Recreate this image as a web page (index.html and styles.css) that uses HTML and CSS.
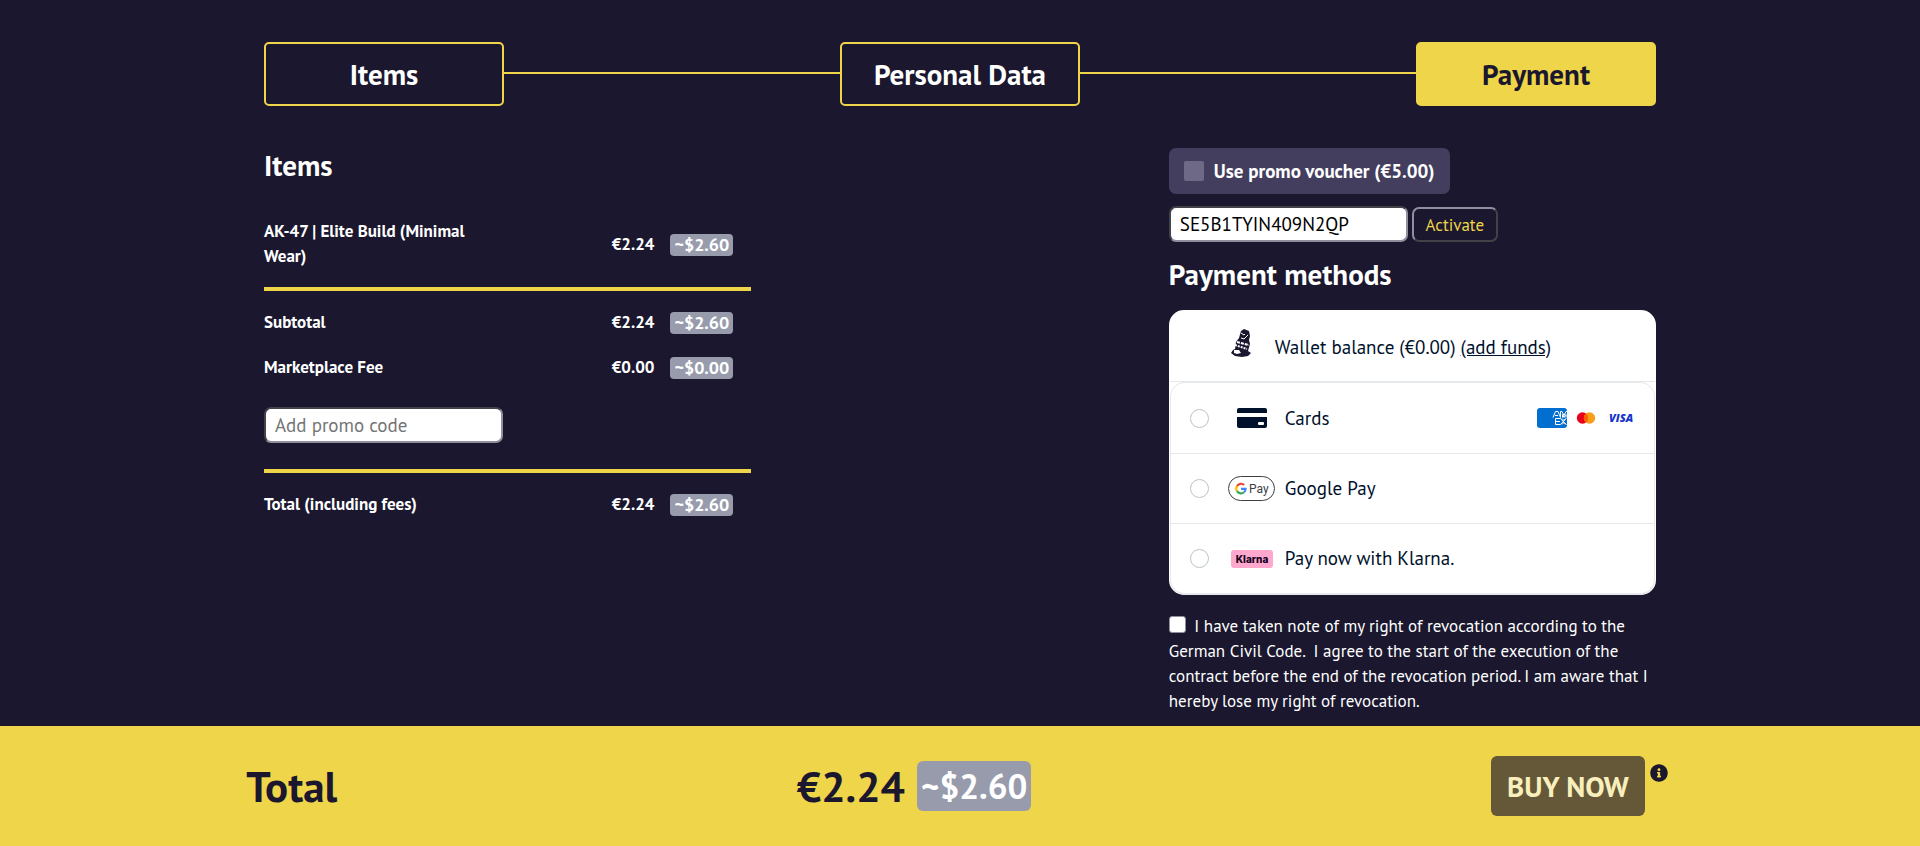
FILE: index.html
```html
<!DOCTYPE html>
<html lang="en">
<head>
    <meta charset="UTF-8">
    <meta name="viewport" content="width=device-width, initial-scale=1">
    <title>Checkout - Payment</title>
    <link rel="stylesheet" href="styles.css">
</head>
<body>
<main class="container">
    <nav class="steps">
        <a class="step" href="#items">Items</a>
        <span class="step-line"></span>
        <a class="step" href="#personal">Personal Data</a>
        <span class="step-line"></span>
        <a class="step active" href="#payment">Payment</a>
    </nav>

    <div class="columns">
        <section class="summary">
            <h2>Items</h2>
            <table class="items">
                <tbody>
                <tr class="ruled">
                    <th scope="row">AK-47 | Elite Build (Minimal Wear)</th>
                    <td><span class="price">€2.24</span><span class="badge">~$2.60</span></td>
                </tr>
                <tr class="after-rule">
                    <th scope="row">Subtotal</th>
                    <td><span class="price">€2.24</span><span class="badge">~$2.60</span></td>
                </tr>
                <tr>
                    <th scope="row">Marketplace Fee</th>
                    <td><span class="price">€0.00</span><span class="badge">~$0.00</span></td>
                </tr>
                <tr class="ruled promo">
                    <td colspan="2"><input class="code" type="text" placeholder="Add promo code" aria-label="Add promo code"></td>
                </tr>
                <tr class="after-rule">
                    <th scope="row">Total (including fees)</th>
                    <td><span class="price">€2.24</span><span class="badge">~$2.60</span></td>
                </tr>
                </tbody>
            </table>
        </section>

        <section class="payment">
            <label class="voucher">
                <input type="checkbox">
                Use promo voucher (€5.00)
            </label>
            <form class="activate">
                <input class="code" type="text" value="SE5B1TYIN409N2QP" aria-label="Voucher code">
                <button type="button">Activate</button>
            </form>
            <h2>Payment methods</h2>
            <div class="methods">
                <div class="wallet">
                    <svg width="22" height="28" viewBox="0 0 22 28" aria-hidden="true">
                        <path fill="#1a172e" d="M11 2l3-2 5 2 1 5-1 4 1 4-2 7 3 2-3 3-6 1-7-1-4-3 2-3 2-1 1-7 3-4z"/>
                        <path fill="none" stroke="#fff" stroke-width="1" d="M11 4l3 2 1-1M11 9l3 1 4-4"/>
                        <path fill="none" stroke="#fff" stroke-width="2" stroke-dasharray="3 1" d="M7 13l12 3"/>
                        <path fill="none" stroke="#fff" stroke-width="2" stroke-dasharray="2 1" d="M5 16l12 4"/>
                        <path fill="#fff" d="M4 21l5 0 2 3-4 1-3-1z"/>
                    </svg>
                    <span>Wallet balance (€0.00) <a href="#funds">(add funds)</a></span>
                </div>
                <div class="method-list">
                    <label class="method">
                        <input type="radio" name="method">
                        <span class="method-icon">
                            <svg width="30" height="20" viewBox="0 0 30 20" aria-hidden="true">
                                <rect width="30" height="20" rx="2" fill="#00112c"/>
                                <rect y="5" width="30" height="4" fill="#fff"/>
                                <rect x="21" y="14" width="6" height="3" rx="1" fill="#fff"/>
                            </svg>
                        </span>
                        <span>Cards</span>
                        <span class="brands">
                            <svg width="30" height="20" viewBox="0 0 30 20" aria-label="American Express">
                                <rect width="30" height="20" rx="3" fill="#006fcf"/>
                                <g fill="none" stroke="#fff" stroke-width="1">
                                    <path d="M16 9.500l2.500-6h2.500l2.500 6M18 7.500h3M23.500 9.500v-6h1.500l2 4 2-4h1M25.500 9.500v-3l1.500 3 2-3v3"/>
                                    <path d="M23.500 10.500h-5v6h5M18.500 13.500h4.500M23.500 10.500l5.500 6M29 10.500l-5.500 6M25 10.500l2 2 2-2M25 16.500l2-2 2 2"/>
                                </g>
                            </svg>
                            <svg width="30" height="20" viewBox="0 0 30 20" aria-label="Mastercard">
                                <circle cx="11.500" cy="10" r="5.700" fill="#eb001b"/>
                                <circle cx="18.500" cy="10" r="5.700" fill="#f79e1b"/>
                                <path fill="#ff5f00" d="M15 5.500a5.700 5.700 0 0 1 0 9 5.700 5.700 0 0 1 0-9z"/>
                            </svg>
                            <svg width="30" height="20" viewBox="0 0 30 20" aria-label="Visa">
                                <text x="4" y="14" class="visa">VISA</text>
                            </svg>
                        </span>
                    </label>
                    <label class="method">
                        <input type="radio" name="method">
                        <span class="method-icon">
                            <svg width="47" height="26" viewBox="0 0 47 26" aria-hidden="true">
                                <rect x=".5" y=".5" width="46" height="24" rx="12" fill="#fff" stroke="#3c4043"/>
                                <g fill="none" stroke-width="2.200">
                                    <path stroke="#ea4335" d="M9 10.200a4.600 4.600 0 0 1 7.200-1.200"/>
                                    <path stroke="#fbbc04" d="M9 15.200a4.600 4.600 0 0 1 0-5"/>
                                    <path stroke="#34a853" d="M9 15.200a4.600 4.600 0 0 0 7 1"/>
                                    <path stroke="#4285f4" d="M13 12.800h4.600a4.600 4.600 0 0 1-1.600 3.400"/>
                                </g>
                                <text x="21" y="17" class="gpay">Pay</text>
                            </svg>
                        </span>
                        <span>Google Pay</span>
                    </label>
                    <label class="method">
                        <input type="radio" name="method">
                        <span class="method-icon">
                            <svg width="42" height="18" viewBox="0 0 42 18" aria-hidden="true">
                                <rect width="42" height="18" rx="3" fill="#ffa8cd"/>
                                <text x="21" y="13" text-anchor="middle" class="klarna">Klarna</text>
                            </svg>
                        </span>
                        <span>Pay now with Klarna.</span>
                    </label>
                </div>
            </div>
            <label class="terms">
                <input type="checkbox">
                I have taken note of my right of revocation according to the German Civil Code.&nbsp; I agree to the start of the execution of the contract before the end of the revocation period. I am aware that I hereby lose my right of revocation.
            </label>
        </section>
    </div>
</main>

<footer class="total-bar">
    <div class="total-inner">
        <span>Total</span>
        <div class="total-price">
            <span>€2.24</span>
            <span class="badge">~$2.60</span>
        </div>
        <div class="buy">
            <button type="button" disabled>BUY NOW</button>
            <svg width="18" height="18" viewBox="0 0 512 512" role="img" aria-label="Info">
                <path fill="#1a172e" d="M256 8C119 8 8 119 8 256s111 248 248 248 248-111 248-248S393 8 256 8zm0 110c23 0 42 19 42 42s-19 42-42 42-42-19-42-42 19-42 42-42zm56 254c0 7-5 12-12 12h-88c-7 0-12-5-12-12v-24c0-7 5-12 12-12h12v-64h-12c-7 0-12-5-12-12v-24c0-7 5-12 12-12h64c7 0 12 5 12 12v100h12c7 0 12 5 12 12v24z"/>
            </svg>
        </div>
    </div>
</footer>
</body>
</html>
```

FILE: styles.css
```css
* {
    box-sizing: border-box;
}

body {
    margin: 0;
    min-height: 100vh;
    display: flex;
    flex-direction: column;
    background-color: #1a172e;
    color: white;
    font-family: "PT Sans", Lato, "Noto Sans", sans-serif;
    font-size: 17px;
    line-height: 25px;
}

input, button {
    font-family: inherit;
    margin: 0;
}

h2 {
    margin: 0;
    font-size: 29px;
    line-height: 34px;
}

.container {
    width: 72.5%;
    margin: 0 auto;
    padding-top: 42px;
    flex: 1;
}

/* steps */
.steps {
    display: flex;
    align-items: center;
}

.step {
    width: 240px;
    height: 64px;
    border: 2px solid #efd549;
    border-radius: 5px;
    color: white;
    font-size: 29px;
    font-weight: bold;
    line-height: 60px;
    text-align: center;
    text-decoration: none;
}

.step.active {
    background-color: #efd549;
    color: #1a172e;
}

.step-line {
    flex: 1;
    height: 2px;
    margin-bottom: 2px;
    background-color: #efd549;
}

.columns {
    display: flex;
    justify-content: space-between;
    padding-top: 42px;
}

.summary, .payment {
    width: 35%;
}

/* item list */
.items {
    width: 100%;
    margin-top: 27px;
    border-collapse: collapse;
}

.items th, .items td {
    padding: 10px 0;
    text-align: left;
}

.items th {
    width: 46%;
}

.items th + td {
    padding-right: 18px;
    text-align: right;
    font-weight: bold;
}

.items .ruled > * {
    padding-bottom: 18px;
    border-bottom: 4px solid #efd549;
}

.items .after-rule > * {
    padding-top: 19px;
}

.items .promo td {
    padding: 17px 0 26px;
}

.price {
    margin-right: 16px;
}

.badge {
    display: inline-block;
    padding: 0 4px;
    border-radius: 4px;
    background-color: #979bac;
    color: white;
    font-size: 18px;
    font-weight: bold;
    line-height: 22px;
}

.items .badge {
    vertical-align: -1px;
}

.code {
    display: block;
    width: 239px;
    height: 36px;
    padding: 0 9px;
    border: 2px inset #8f8f9d;
    border-radius: 7px;
    background-color: white;
    color: black;
    font-size: 19px;
}

.code::placeholder {
    color: #757575;
}

/* voucher */
.voucher {
    display: inline-flex;
    align-items: center;
    gap: 10px;
    height: 46px;
    padding: 0 15px;
    border-radius: 7px;
    background-color: #433e5e;
    font-size: 19px;
    font-weight: bold;
    vertical-align: top;
}

.voucher input {
    appearance: none;
    width: 20px;
    height: 20px;
    border-radius: 2px;
    background-color: #6d6986;
}

.activate {
    display: flex;
    align-items: flex-end;
    gap: 4px;
    margin: 12px 0 15px;
}

.activate button {
    width: 86px;
    height: 35px;
    padding: 0;
    border: 2px outset #8f8f9d;
    border-radius: 7px;
    background-color: #1a172e;
    color: #efd549;
    font-size: 17px;
}

/* payment methods */
.methods {
    margin-top: 19px;
    padding: 0 1px;
    border-radius: 15px;
    background-color: white;
    color: #00112c;
    font-size: 19px;
}

.methods a {
    color: inherit;
}

.wallet {
    display: flex;
    align-items: center;
    gap: 23px;
    height: 72px;
    padding: 3px 0 0 60px;
    border-bottom: 1px solid #e6e9eb;
}

.wallet svg {
    margin-bottom: 8px;
}

.method-list {
    border: 1px solid #e6e9eb;
    border-bottom-width: 2px;
    border-radius: 15px;
}

.method {
    display: flex;
    align-items: center;
    height: 70px;
    padding: 0 19px;
}

.method + .method {
    border-top: 1px solid #e6e9eb;
}

.method input {
    appearance: none;
    width: 19px;
    height: 19px;
    border: 1px solid #b9c4c9;
    border-radius: 50%;
}

.method-icon {
    display: flex;
    justify-content: center;
    width: 48px;
    margin: 0 9px 0 19px;
}

.brands {
    display: flex;
    gap: 4px;
    margin-left: auto;
}

.visa {
    fill: #1434cb;
    font: italic 900 11px "Open Sans", sans-serif;
}

.gpay {
    fill: #3c4043;
    font: 12px Roboto, sans-serif;
}

.klarna {
    fill: #17001f;
    font: 800 10px Inter, sans-serif;
}

.terms {
    display: block;
    padding: 19px 0 11px;
}

.terms input {
    appearance: none;
    width: 17px;
    height: 17px;
    margin-right: 4px;
    border: 1px solid #8f8f9d;
    border-radius: 3px;
    background-color: white;
    vertical-align: -1px;
}

/* total */
.total-bar {
    position: sticky;
    bottom: 0;
    padding-right: 6px;
    background-color: #efd549;
    color: #1a172e;
    font-size: 43px;
    font-weight: bold;
    line-height: 60px;
}

.total-inner {
    display: flex;
    justify-content: space-between;
    align-items: center;
    width: calc(72.5% + 34px);
    height: 120px;
    margin: 0 auto;
}

.total-price {
    display: flex;
    align-items: center;
    gap: 12px;
}

.total-price .badge {
    border-radius: 6px;
    font-size: 35px;
    line-height: 50px;
}

.buy {
    display: flex;
    gap: 5px;
}

.buy button {
    height: 60px;
    padding: 0 16px;
    border: 0;
    border-radius: 6px;
    background-color: #645839;
    color: #f9efbd;
    font-size: 29px;
    font-weight: bold;
}

.buy svg {
    margin-top: 8px;
}
```
